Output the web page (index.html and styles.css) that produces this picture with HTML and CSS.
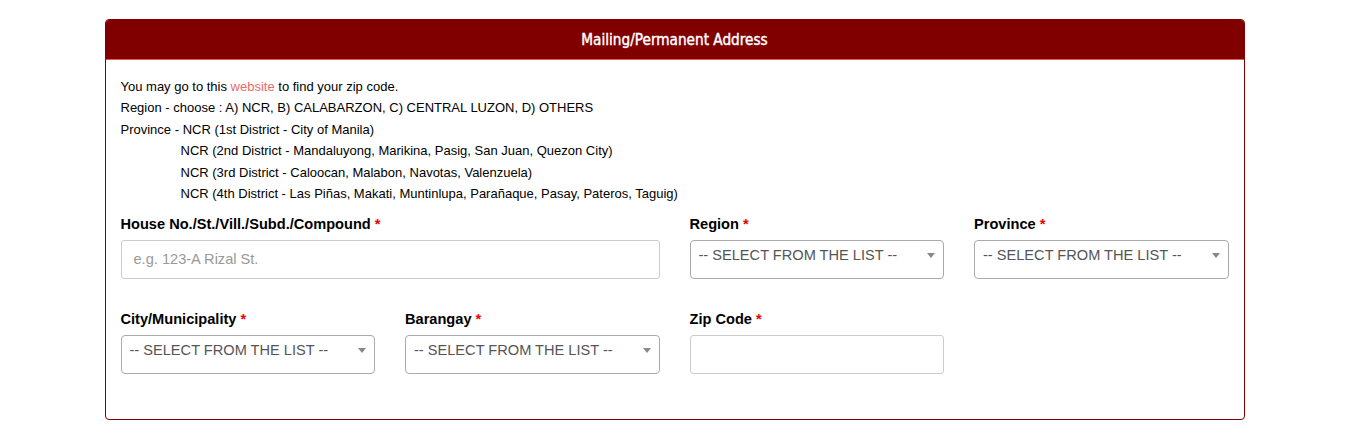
FILE: index.html
```html
<!DOCTYPE html>
<html>
<head>
<meta charset="utf-8">
<link rel="stylesheet" href="styles.css">
</head>
<body>
<div class="container">
  <div class="card">
    <div class="card-header">Mailing/Permanent Address</div>
    <div class="card-body">
      <div class="notes">
        <p>You may go to this <a href="#" class="link">website</a> to find your zip code.</p>
        <p>Region - choose : A) NCR, B) CALABARZON, C) CENTRAL LUZON, D) OTHERS</p>
        <p>Province - NCR (1st District - City of Manila)</p>
        <p class="indent">NCR (2nd District - Mandaluyong, Marikina, Pasig, San Juan, Quezon City)</p>
        <p class="indent">NCR (3rd District - Caloocan, Malabon, Navotas, Valenzuela)</p>
        <p class="indent">NCR (4th District - Las Piñas, Makati, Muntinlupa, Parañaque, Pasay, Pateros, Taguig)</p>
      </div>
      <div class="grid">
        <div class="field span2">
          <label>House No./St./Vill./Subd./Compound <span class="req">*</span></label>
          <div class="input placeholder">e.g. 123-A Rizal St.</div>
        </div>
        <div class="field">
          <label>Region <span class="req">*</span></label>
          <div class="select">-- SELECT FROM THE LIST --<span class="caret"></span></div>
        </div>
        <div class="field">
          <label>Province <span class="req">*</span></label>
          <div class="select">-- SELECT FROM THE LIST --<span class="caret"></span></div>
        </div>
        <div class="field">
          <label>City/Municipality <span class="req">*</span></label>
          <div class="select">-- SELECT FROM THE LIST --<span class="caret"></span></div>
        </div>
        <div class="field">
          <label>Barangay <span class="req">*</span></label>
          <div class="select">-- SELECT FROM THE LIST --<span class="caret"></span></div>
        </div>
        <div class="field">
          <label>Zip Code <span class="req">*</span></label>
          <div class="input"></div>
        </div>
      </div>
    </div>
  </div>
</div>
</body>
</html>
```
FILE: styles.css
```css
html, body {
  margin: 0;
  padding: 0;
  background: #fff;
  font-family: "Liberation Sans", Arial, sans-serif;
  color: #000;
}
.container {
  width: 1140px;
  margin: 0 auto;
  padding-top: 19px;
}
.card {
  border: 1px solid #800000;
  border-radius: 4px;
  overflow: hidden;
}
.card-header {
  background: #800000;
  color: #fff;
  text-align: center;
  height: 39px;
  line-height: 40px;
  font-family: "DejaVu Sans Condensed", "Liberation Sans Narrow", sans-serif;
  font-size: 15.2px;
  font-weight: normal;
  -webkit-text-stroke: 0.4px #fff;
  border-bottom: 1px solid #e25b5b;
}
.card-body {
  padding: 16px 15px 45px 15px;
}
.notes p {
  margin: 0;
  font-size: 13px;
  line-height: 21.4px;
}
.notes .indent {
  padding-left: 60px;
}
.link {
  color: #e96a6a;
  text-decoration: none;
}
.grid {
  display: grid;
  grid-template-columns: repeat(4, 1fr);
  column-gap: 30px;
  row-gap: 30px;
  margin-top: 10px;
}
.span2 {
  grid-column: span 2;
}
.field label {
  display: block;
  font-size: 14.6px;
  font-weight: bold;
  line-height: 20px;
  margin-bottom: 6px;
}
.req {
  color: #e00;
}
.input, .select {
  box-sizing: border-box;
  height: 39px;
  border: 1px solid #ccc;
  border-radius: 3px;
  font-size: 14.6px;
  color: #555;
  position: relative;
}
.input {
  padding: 0 12px;
  line-height: 37px;
}
.placeholder {
  color: #999;
}
.select {
  padding: 0 8px;
  line-height: 29px;
  border-color: #aaa;
  border-radius: 4px;
}
.caret {
  position: absolute;
  right: 8px;
  top: 12px;
  width: 0;
  height: 0;
  border-left: 4px solid transparent;
  border-right: 4px solid transparent;
  border-top: 5px solid #888;
}
```
